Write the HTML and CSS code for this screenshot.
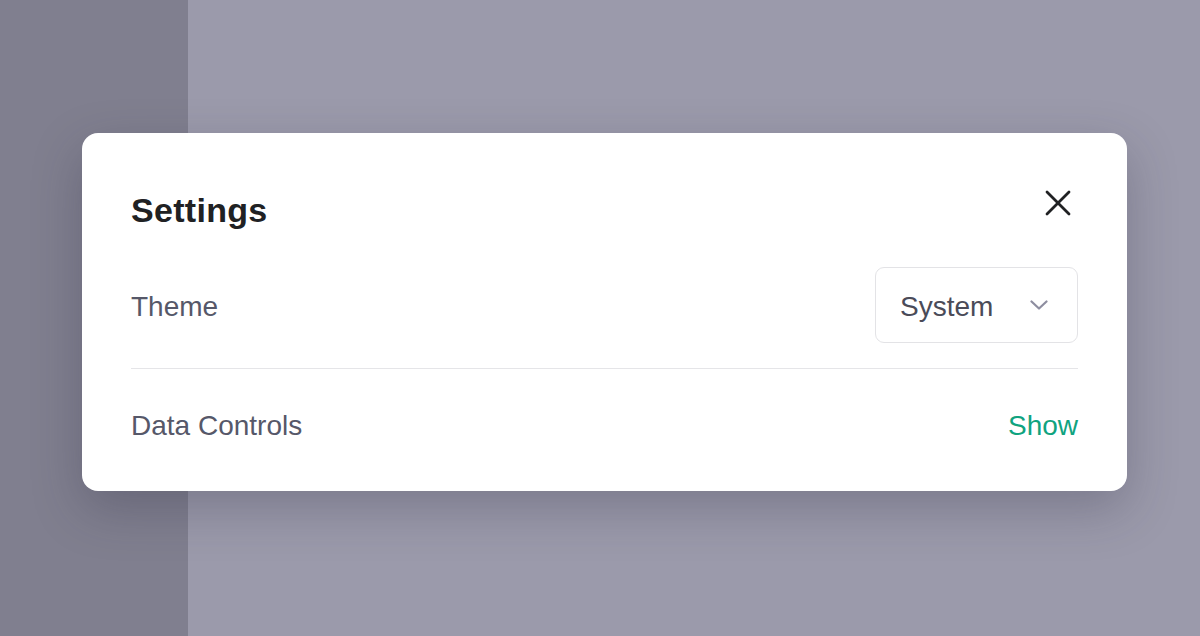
FILE: index.html
```html
<!DOCTYPE html>
<html lang="en">
<head>
<meta charset="utf-8">
<title>Settings</title>
<link rel="stylesheet" href="styles.css">
</head>
<body>
<div class="app">
  <aside class="sidebar"></aside>
  <main class="main"></main>
</div>
<div class="modal" role="dialog" aria-label="Settings">
  <div class="modal-header">
    <h2 class="modal-title">Settings</h2>
    <button class="close-btn" aria-label="Close">
      <svg width="26" height="26" viewBox="0 0 26 26" fill="none" stroke="#202123" stroke-width="2.8" stroke-linecap="round">
        <line x1="2" y1="2" x2="24" y2="24"/>
        <line x1="24" y1="2" x2="2" y2="24"/>
      </svg>
    </button>
  </div>
  <div class="row theme-row">
    <span class="label">Theme</span>
    <div class="select">
      <span class="select-value">System</span>
      <svg class="chevron" width="18" height="10" viewBox="0 0 18 10" fill="none" stroke="#8e8ea0" stroke-width="2.2" stroke-linecap="round" stroke-linejoin="round">
        <polyline points="1.5,1.5 9,8.5 16.5,1.5"/>
      </svg>
    </div>
  </div>
  <div class="divider"></div>
  <div class="row data-row">
    <span class="label">Data Controls</span>
    <button class="link-btn">Show</button>
  </div>
</div>
</body>
</html>
```
FILE: styles.css
```css
html, body {
  margin: 0;
  padding: 0;
  width: 1200px;
  height: 636px;
  overflow: hidden;
  font-family: "Liberation Sans", Arial, sans-serif;
}

.app {
  display: flex;
  width: 1200px;
  height: 636px;
}

.sidebar {
  width: 188px;
  flex: none;
  background: #807f8f;
}

.main {
  flex: 1;
  background: #9b9aab;
}

.modal {
  position: absolute;
  left: 82px;
  top: 133px;
  width: 1045px;
  box-sizing: border-box;
  padding: 0 49px 12px;
  background: #ffffff;
  border-radius: 16px;
  box-shadow: 0 18px 50px rgba(40, 38, 60, 0.28);
}

.modal-header {
  display: flex;
  justify-content: space-between;
  align-items: flex-start;
  padding-top: 57px;
  margin-bottom: 37px;
}

.modal-title {
  margin: 0;
  font-size: 34px;
  line-height: 40px;
  font-weight: 700;
  color: #202123;
  letter-spacing: 0.3px;
}

.close-btn {
  border: 0;
  background: none;
  padding: 0;
  margin-right: 7px;
  width: 26px;
  height: 26px;
  display: flex;
  cursor: pointer;
}

.row {
  display: flex;
  justify-content: space-between;
  align-items: center;
}

.theme-row {
  height: 76px;
}

.data-row {
  height: 110px;
}

.label {
  font-size: 28px;
  line-height: 34px;
  padding-top: 4px;
  color: #565869;
}

.select {
  box-sizing: border-box;
  width: 203px;
  height: 76px;
  border: 1px solid #e3e3e6;
  border-radius: 9px;
  display: flex;
  align-items: center;
  justify-content: space-between;
  padding: 0 29px 0 24px;
}

.select-value {
  font-size: 28px;
  line-height: 34px;
  padding-top: 4px;
  color: #4a4b58;
}

.chevron {
  display: block;
}

.divider {
  height: 1px;
  background: #e5e5e8;
  margin-top: 25px;
}

.link-btn {
  border: 0;
  background: none;
  padding: 4px 0 0;
  font-family: inherit;
  font-size: 28px;
  line-height: 34px;
  color: #10a37f;
  cursor: pointer;
}
```
